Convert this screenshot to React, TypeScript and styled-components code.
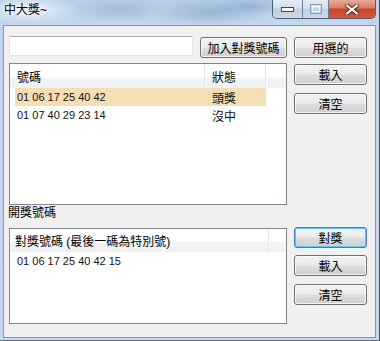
import styled, { createGlobalStyle } from "styled-components";

const GlobalStyle = createGlobalStyle`
  html, body {
    margin: 0;
    padding: 0;
    background: #ffffff;
  }
  body {
    font-family: "Liberation Sans", "Noto Sans CJK TC", sans-serif;
    font-size: 12px;
    color: #000;
  }
`;

const FONT = `"Liberation Sans", "Noto Sans CJK TC", sans-serif`;

const Window = styled.div`
  width: 380px;
  height: 341px;
  box-sizing: border-box;
  padding: 0 3px 2px 3px;
  display: flex;
  flex-direction: column;
  background:
    radial-gradient(ellipse 60px 14px at 210px 12px, rgba(110, 145, 190, 0.45), transparent),
    radial-gradient(ellipse 50px 12px at 120px 10px, rgba(120, 150, 195, 0.35), transparent),
    radial-gradient(ellipse 40px 10px at 250px 6px, rgba(100, 135, 185, 0.35), transparent),
    radial-gradient(ellipse 50px 14px at 30px 10px, rgba(240, 246, 252, 0.9), transparent),
    linear-gradient(to bottom, #b9cfe9 0px, #c3d6ec 25px, #c6d9ee 100%);
  border-right: 1px solid #3a4a5e;
  border-bottom: 1px solid #5a6f88;
`;

const TitleBar = styled.div`
  height: 25px;
  display: flex;
  justify-content: space-between;
  align-items: flex-start;
  flex-shrink: 0;
`;

const Title = styled.div`
  padding: 3px 0 0 1px;
  line-height: 15px;
  font-size: 12px;
  font-family: ${FONT};
  color: #000;
  text-shadow: 0 0 4px #fff, 0 0 6px #fff;
`;

const CaptionGroup = styled.div`
  display: flex;
  height: 19px;
  border: 1px solid #4d5f76;
  border-top: none;
  border-radius: 0 0 5px 5px;
  overflow: hidden;
  box-sizing: border-box;
`;

const CaptionButton = styled.div<{ $w: number; $close?: boolean }>`
  width: ${(p) => p.$w}px;
  height: 100%;
  display: flex;
  align-items: center;
  justify-content: center;
  box-sizing: border-box;
  border-left: ${(p) => (p.$w === 29 ? "none" : "1px solid #6d7f96")};
  background: ${(p) =>
    p.$close
      ? "linear-gradient(to bottom, #e9a99b 0%, #d77b66 45%, #c8432c 50%, #d2573b 100%)"
      : "linear-gradient(to bottom, #e4ebf4 0%, #d4dfec 45%, #bfcfe2 50%, #cbd9ea 100%)"};
`;

const Client = styled.div`
  flex: 1;
  box-sizing: border-box;
  border: 1px solid #8596ab;
  background: #f0f0f0;
  padding: 10px 0 0 5px;
  display: flex;
  flex-direction: column;
`;

const TopRow = styled.div`
  display: flex;
  align-items: flex-start;
  height: 22px;
`;

const TextInput = styled.div`
  width: 184px;
  height: 20px;
  box-sizing: border-box;
  background: #fff;
  border: 1px solid #e2e3ea;
  border-top-color: #abadb3;
  border-radius: 2px;
`;

const Button = styled.div<{ $w?: number; $default?: boolean; $top?: number; $gap?: number }>`
  width: ${(p) => p.$w ?? 73}px;
  height: 21px;
  margin-top: ${(p) => p.$top ?? 0}px;
  margin-left: ${(p) => p.$gap ?? 0}px;
  box-sizing: border-box;
  display: flex;
  align-items: center;
  justify-content: center;
  font-family: ${FONT};
  font-size: 12px;
  color: #000;
  border: 1px solid ${(p) => (p.$default ? "#3c7fb1" : "#707070")};
  border-radius: 3px;
  background: linear-gradient(to bottom, #f2f2f2 0%, #ebebeb 48%, #dddddd 52%, #cfcfcf 100%);
  box-shadow: inset 0 0 0 1px ${(p) => (p.$default ? "#5cc6f5" : "rgba(255, 255, 255, 0.75)")};
`;

const Section = styled.div<{ $top: number }>`
  display: flex;
  align-items: flex-start;
  margin-top: ${(p) => p.$top}px;
`;

const SideColumn = styled.div`
  display: flex;
  flex-direction: column;
  margin-left: 7px;
`;

const List = styled.div<{ $h: number }>`
  width: 278px;
  height: ${(p) => p.$h}px;
  box-sizing: border-box;
  border: 1px solid #828790;
  background: #fff;
  overflow: hidden;
`;

const ListHeader = styled.div<{ $columns: string; $h: number }>`
  display: grid;
  grid-template-columns: ${(p) => p.$columns};
  height: ${(p) => p.$h}px;
  background: linear-gradient(to bottom, #ffffff 0%, #ffffff 55%, #f3f4f6 58%, #f0f1f3 100%);
`;

const HeaderCell = styled.div<{ $pad: number; $divider?: boolean }>`
  display: flex;
  align-items: center;
  padding-left: ${(p) => p.$pad}px;
  font-family: ${FONT};
  font-size: 12px;
  color: #000;
  border-right: ${(p) => (p.$divider ? "1px solid #e4e6ea" : "none")};
  box-shadow: ${(p) => (p.$divider ? "1px 0 0 #fcfcfd" : "none")};
  white-space: nowrap;
`;

const Row = styled.div<{ $columns: string; $selected?: boolean }>`
  display: grid;
  grid-template-columns: ${(p) => p.$columns};
  height: 18px;
  margin-left: 5px;
  width: 251px;
  background: ${(p) => (p.$selected ? "#f5deb3" : "transparent")};
`;

const Cell = styled.div<{ $pad: number; $cjk?: boolean }>`
  display: flex;
  align-items: center;
  padding-left: ${(p) => p.$pad}px;
  font-family: ${FONT};
  font-size: ${(p) => (p.$cjk ? 12 : 11)}px;
  color: #111;
  white-space: nowrap;
`;

const Label = styled.div`
  height: 23px;
  line-height: 16px;
  padding-left: 0;
  margin-left: -1px;
  font-family: ${FONT};
  font-size: 12px;
  color: #000;
`;

const Tickets = [
  { num: "01 06 17 25 40 42", state: "頭獎", selected: true },
  { num: "01 07 40 29 23 14", state: "沒中", selected: false },
];

const MinimizeIcon = () => (
  <svg width="13" height="5" viewBox="0 0 13 5">
    <rect x="0.5" y="0.5" width="12" height="4" fill="#fff" stroke="#3b4a5c" />
  </svg>
);

const MaximizeIcon = () => (
  <svg width="12" height="10" viewBox="0 0 12 10">
    <rect x="0.5" y="0.5" width="11" height="9" fill="none" stroke="#8a9bb0" />
    <rect x="2.5" y="2.5" width="7" height="5" fill="none" stroke="#f4f7fb" />
  </svg>
);

const CloseIcon = () => (
  <svg width="14" height="11" viewBox="0 0 14 11">
    <path d="M2 1.5 L12 9.5 M12 1.5 L2 9.5" stroke="#5a1e14" strokeWidth="4.2" strokeLinecap="square" />
    <path d="M2 1.5 L12 9.5 M12 1.5 L2 9.5" stroke="#ffffff" strokeWidth="2.2" strokeLinecap="square" />
  </svg>
);

export default function App() {
  return (
    <>
      <GlobalStyle />
      <Window>
        <TitleBar>
          <Title>中大獎~</Title>
          <CaptionGroup>
            <CaptionButton $w={29}>
              <MinimizeIcon />
            </CaptionButton>
            <CaptionButton $w={26}>
              <MaximizeIcon />
            </CaptionButton>
            <CaptionButton $w={47} $close>
              <CloseIcon />
            </CaptionButton>
          </CaptionGroup>
        </TitleBar>
        <Client>
          <TopRow>
            <TextInput />
            <Button $w={87} $gap={7} $top={1}>
              加入對獎號碼
            </Button>
            <Button $gap={7} $top={1}>
              用選的
            </Button>
          </TopRow>
          <Section $top={5}>
            <List $h={142}>
              <ListHeader $columns="195px 61px 1fr" $h={24}>
                <HeaderCell $pad={7} $divider>
                  號碼
                </HeaderCell>
                <HeaderCell $pad={7} $divider>
                  狀態
                </HeaderCell>
                <HeaderCell $pad={0} />
              </ListHeader>
              {Tickets.map((t) => (
                <Row key={t.num} $columns="190px 61px" $selected={t.selected}>
                  <Cell $pad={2}>{t.num}</Cell>
                  <Cell $pad={7} $cjk>
                    {t.state}
                  </Cell>
                </Row>
              ))}
            </List>
            <SideColumn>
              <Button $top={1}>載入</Button>
              <Button $top={8}>清空</Button>
            </SideColumn>
          </Section>
          <Label>開獎號碼</Label>
          <Section $top={0}>
            <List $h={96}>
              <ListHeader $columns="259px 1fr" $h={23}>
                <HeaderCell $pad={5} $divider>
                  對獎號碼 (最後一碼為特別號)
                </HeaderCell>
                <HeaderCell $pad={0} />
              </ListHeader>
              <Row $columns="251px">
                <Cell $pad={2}>01 06 17 25 40 42 15</Cell>
              </Row>
            </List>
            <SideColumn>
              <Button $top={-1} $default>
                對獎
              </Button>
              <Button $top={7}>載入</Button>
              <Button $top={8}>清空</Button>
            </SideColumn>
          </Section>
        </Client>
      </Window>
    </>
  );
}
